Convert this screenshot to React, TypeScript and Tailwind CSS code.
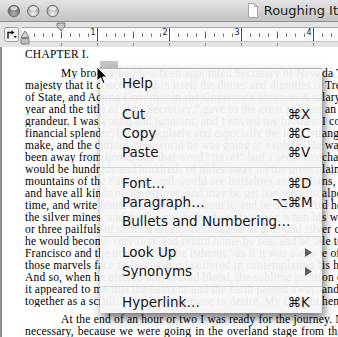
import { Fragment } from 'react';

type Line = { left: string; right: string; indent?: boolean; gap?: boolean };

const lines: Line[] = [
  { left: 'My brother had just been appointed Secretary of Neva', right: 'da Territory—an office', indent: true },
  { left: 'majesty that it concentrated in itself the duties and dignities of', right: 'Treasurer, Comptroller', gap: true },
  { left: "of State, and Acting Governor in the Governor's absence. A sa", right: 'lary of eighteen' },
  { left: 'year and the title of “Mr. Secretary,” gave to the great position', right: 'an air of wild', gap: true },
  { left: 'grandeur. I was young and ignorant, and I envied my brother.', right: 'I coveted his' },
  { left: 'financial splendor, but particularly and especially the long, str', right: 'ange journey' },
  { left: 'make, and the curious new world he was going to explore. He', right: 'was going to', gap: true },
  { left: 'been away from home, and that word “travel” had a seductive', right: 'charm for me.' },
  { left: 'would be hundreds and hundreds of miles away on the great p', right: 'lains and' },
  { left: 'mountains of the Far West, and would see buffaloes and India', right: 'ns, and prairie' },
  { left: 'and have all kinds of adventures, and may be get hanged or sc', right: 'alped, and' },
  { left: 'time, and write home and tell us all about it, and be a hero. An', right: 'd he would' },
  { left: 'the silver mines, and maybe go about of an afternoon when hi', right: 's work was' },
  { left: 'or three pailfuls of shining slugs, and nuggets of gold and silv', right: 'er chunks' },
  { left: 'he would become very rich, and return home by sea, and be ab', right: 'le to talk' },
  { left: 'Francisco and the ocean, and “the isthmus” as if it was a cas', right: 'e of any' },
  { left: 'those marvels face to face. What I suffered in contemplating h', right: 'is happiness,' },
  { left: 'And so, when he offered me, in cold blood, the sublime positi', right: 'on of private' },
  { left: 'it appeared to me that the heavens and the earth passed away,', right: 'and the' },
  { left: 'together as a scroll! I had nothing more to desire. My content. T', right: 'hen my' },
];

type Item =
  | { sep: true }
  | { label: string; mods?: string; key?: string; sub?: boolean };

const items: Item[] = [
  { label: 'Help' },
  { sep: true },
  { label: 'Cut', mods: '⌘', key: 'X' },
  { label: 'Copy', mods: '⌘', key: 'C' },
  { label: 'Paste', mods: '⌘', key: 'V' },
  { sep: true },
  { label: 'Font…', mods: '⌘', key: 'D' },
  { label: 'Paragraph…', mods: '⌥⌘', key: 'M' },
  { label: 'Bullets and Numbering…' },
  { sep: true },
  { label: 'Look Up', sub: true },
  { label: 'Synonyms', sub: true },
  { sep: true },
  { label: 'Hyperlink…', mods: '⌘', key: 'K' },
];

function TrafficLights() {
  return (
    <svg width="70" height="22" viewBox="0 0 70 22">
      <defs>
        <radialGradient id="dark" cx="50%" cy="75%" r="65%">
          <stop offset="0%" stopColor="#b4b4b4" />
          <stop offset="100%" stopColor="#5c5c5c" />
        </radialGradient>
        <radialGradient id="light" cx="50%" cy="75%" r="65%">
          <stop offset="0%" stopColor="#f2f2f2" />
          <stop offset="100%" stopColor="#9d9d9d" />
        </radialGradient>
      </defs>
      {[15, 36, 57].map((cx, i) => (
        <g key={cx}>
          <circle cx={cx} cy="11" r="6.2" fill={i === 0 ? 'url(#dark)' : 'url(#light)'} stroke="#6a6a6a" strokeWidth="1" />
          <ellipse cx={cx} cy="8" rx="3.8" ry="2.2" fill="#ffffff" opacity="0.7" />
        </g>
      ))}
    </svg>
  );
}

function Ruler() {
  const ticks = [];
  for (let i = 1; 25 + i * 9 < 340; i++) {
    const x = 25 + i * 9 + 0.5;
    if (i % 8 === 0) ticks.push(<line key={i} x1={x} x2={x} y1={6} y2={19} stroke="#555" />);
    else if (i % 4 === 0) ticks.push(<line key={i} x1={x} x2={x} y1={9.5} y2={16.5} stroke="#666" />);
    else ticks.push(<line key={i} x1={x} x2={x} y1={11.5} y2={15} stroke="#777" />);
  }
  const tabs = [];
  for (let k = 1; 25 + k * 36 < 340; k++) {
    const x = 25 + k * 36 + 0.5;
    tabs.push(<line key={k} x1={x} x2={x} y1={21} y2={24} stroke="#8c8c8c" />);
  }
  return (
    <svg width="338" height="25" viewBox="0 0 338 25" className="block">
      <rect x="4.5" y="5.5" width="14" height="14" rx="2" fill="#f3f3f3" stroke="#9c9c9c" />
      <path d="M8 16.5 V10.5 H12" fill="none" stroke="#111" strokeWidth="1.4" />
      <polygon points="11.5,8.3 14.5,10.5 11.5,12.7" fill="#111" />
      <polygon points="13.5,14 17,14 15.25,16" fill="#111" />
      <rect x="22" y="5.5" width="316" height="13.5" fill="#fafafa" />
      <line x1="22" x2="338" y1="5.5" y2="5.5" stroke="#a9a9a9" />
      <line x1="22" x2="338" y1="19.5" y2="19.5" stroke="#c9c9c9" />
      {ticks}
      {[1, 2, 3, 4].map((n) => (
        <text key={n} x={25 + n * 72 - 1.5} y="12.5" fontSize="8" textAnchor="end" fill="#222" fontFamily="DejaVu Sans, sans-serif">
          {n}
        </text>
      ))}
      {tabs}
      <polygon points="57,1 65,1 65,4 61,9 57,4" fill="#c4c4c4" stroke="#666" strokeWidth="0.8" />
      <polygon points="25,9 29,15.5 21,15.5" fill="#d2d2d2" stroke="#666" strokeWidth="0.8" />
      <rect x="21" y="16.5" width="8" height="5.5" rx="1" fill="#bdbdbd" stroke="#666" strokeWidth="0.8" />
    </svg>
  );
}

function ContextMenu() {
  return (
    <div className="absolute left-[100px] top-[68px] z-10 h-[245px] w-[222px] border-t border-[#b4b4b4] bg-[#f4f4f4]/[0.95] pt-[5px] font-['DejaVu_Sans',sans-serif] text-[13.5px] text-[#161616] shadow-[2px_5px_9px_rgba(0,0,0,0.55)]">
      {items.map((it, i) =>
        'sep' in it ? (
          <div key={i} className="h-[12px] pt-[5px]">
            <div className="h-px bg-[#d8d8d8]" />
          </div>
        ) : (
          <div key={i} className="flex h-[19px] items-center pl-[22px] pr-[10px] leading-[19px]">
            <span className="flex-1 whitespace-nowrap">{it.label}</span>
            {it.key && (
              <Fragment>
                <span className="w-[40px] text-right">{it.mods}</span>
                <span className="w-[11px]">{it.key}</span>
              </Fragment>
            )}
            {it.sub && (
              <svg width="7" height="9" viewBox="0 0 7 9">
                <polygon points="0,0 7,4.5 0,9" fill="#5e5e5e" />
              </svg>
            )}
          </div>
        ),
      )}
    </div>
  );
}

export default function App() {
  return (
    <div className="relative h-[337px] w-[338px] overflow-hidden bg-white">
      {/* Title bar */}
      <div className="flex h-[22px] items-center border-b border-[#8f8f8f] bg-gradient-to-b from-[#e3e3e3] to-[#c4c4c4]">
        <TrafficLights />
        <div className="ml-[183px] flex items-center gap-[6px]">
          <svg width="10" height="15" viewBox="0 0 10 15">
            <path d="M0.5 0.5 H6.5 L9.5 3.5 V14.5 H0.5 Z" fill="#fdfdfd" stroke="#a5a5a5" />
            <path d="M6.5 0.5 V3.5 H9.5" fill="#e0e0e0" stroke="#a5a5a5" />
          </svg>
          <span className="whitespace-nowrap font-['DejaVu_Sans',sans-serif] text-[13px] leading-[22px] text-[#1c1c1c]">Roughing It</span>
        </div>
      </div>

      {/* Ruler */}
      <div className="h-[25px] bg-[#e4e4e4]">
        <Ruler />
      </div>

      {/* Document */}
      <div className="h-[290px] border-l-2 border-[#909090] pl-[23px] pt-[1px] font-['Liberation_Serif',serif] text-[11.5px] leading-[12px] tracking-[0.2px] text-black">
        <div className="mb-[7px] h-[12px]">CHAPTER I.</div>
        <div className="mb-[6px]">
          {lines.map((l, i) => (
            <div key={i} className="grid h-[12px] grid-cols-[297px_1fr]">
              <div className={`overflow-hidden whitespace-nowrap ${l.indent ? 'pl-[36px]' : ''}`}>{l.left}</div>
              <div className={`whitespace-nowrap ${l.gap ? 'pl-[3px]' : ''}`}>{l.right}</div>
            </div>
          ))}
        </div>
        <div className="whitespace-nowrap pl-[36px]">At the end of an hour or two I was ready for the journey. Not much packing up was</div>
        <div className="whitespace-nowrap [word-spacing:0.8px]">necessary, because we were going in the overland stage from the Missouri frontier</div>
      </div>

      {/* Gray highlight peeking above the menu */}
      <div className="absolute left-[100px] top-[61px] h-[7px] w-[18px] bg-[#c6c6c6]" />

      <ContextMenu />

      {/* Mouse pointer */}
      <svg className="absolute left-[96px] top-[66px] z-20" width="12" height="19" viewBox="0 0 12 19">
        <path d="M1 1 L1 15 L4.5 11.8 L7 17.5 L9 16.6 L6.6 11 L11 11 Z" fill="#000" stroke="#fff" strokeWidth="1" strokeLinejoin="round" />
      </svg>
    </div>
  );
}
